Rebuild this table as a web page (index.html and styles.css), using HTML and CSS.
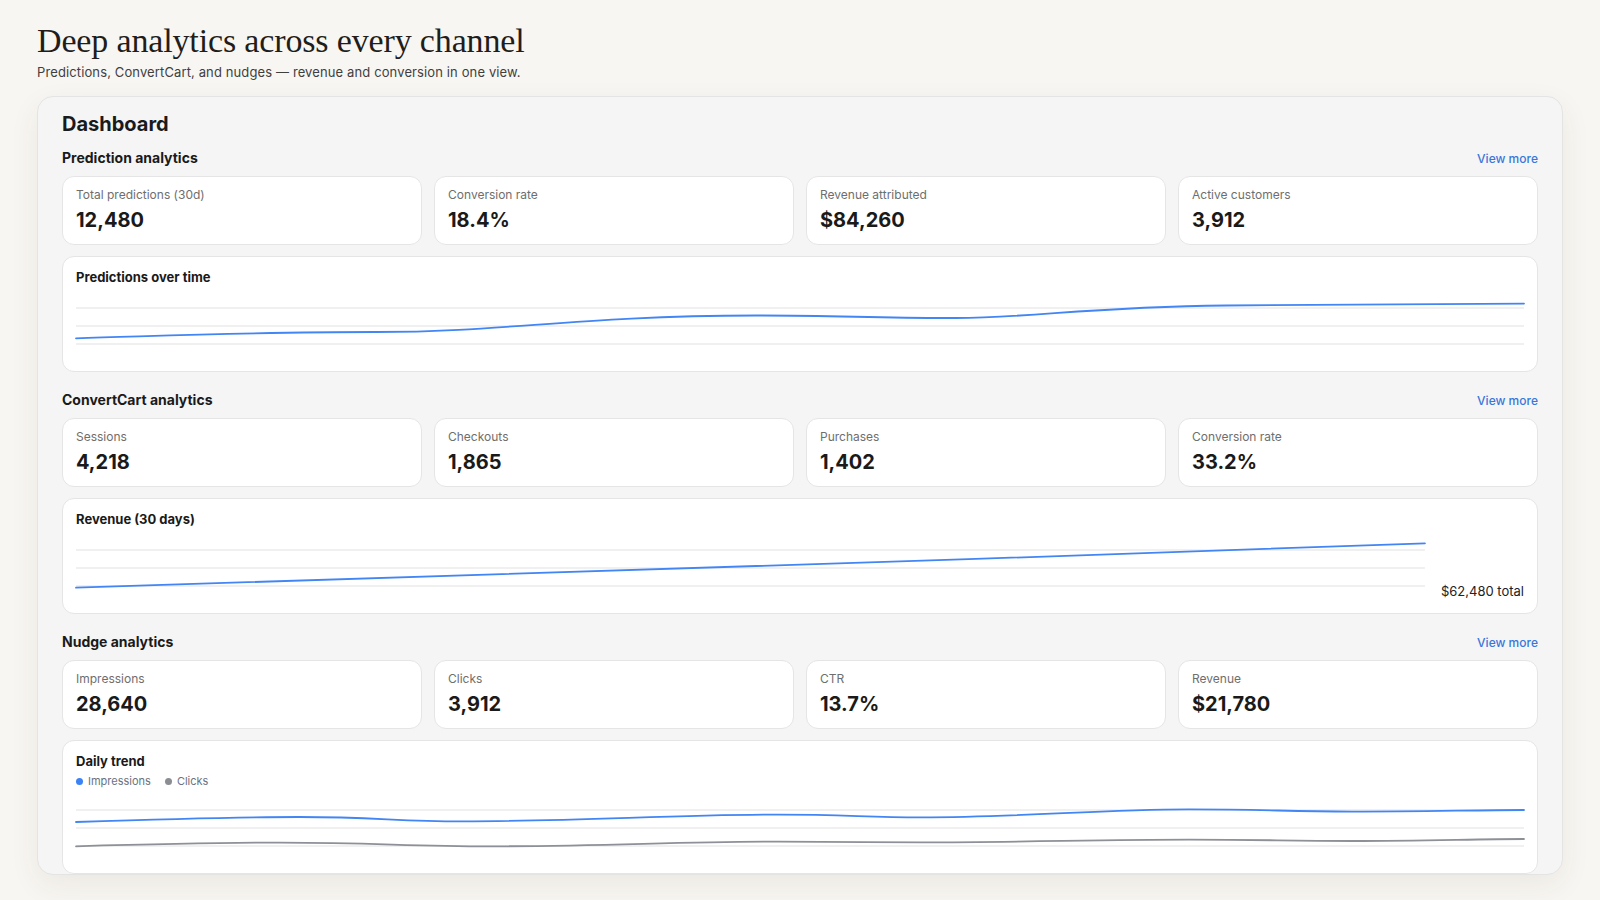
FILE: index.html
```html
<!DOCTYPE html>
<html lang="en">
<head>
<meta charset="utf-8">
<title>Deep analytics across every channel</title>
<link rel="stylesheet" href="styles.css">
</head>
<body>
<div class="page">
  <header class="hero">
    <h1 class="hero-title">Deep analytics across every channel</h1>
    <p class="hero-sub">Predictions, ConvertCart, and nudges — revenue and conversion in one view.</p>
  </header>

  <main class="panel">
    <h2 class="panel-title">Dashboard</h2>

    <section class="section">
      <div class="section-head">
        <h3 class="section-title">Prediction analytics</h3>
        <a class="view-more" href="#">View more</a>
      </div>
      <div class="stats">
        <div class="stat"><div class="stat-label">Total predictions (30d)</div><div class="stat-value">12,480</div></div>
        <div class="stat"><div class="stat-label">Conversion rate</div><div class="stat-value">18.4%</div></div>
        <div class="stat"><div class="stat-label">Revenue attributed</div><div class="stat-value">$84,260</div></div>
        <div class="stat"><div class="stat-label">Active customers</div><div class="stat-value">3,912</div></div>
      </div>
      <div class="chart-card">
        <div class="chart-title">Predictions over time</div>
        <svg class="chart" viewBox="0 0 1448 72" preserveAspectRatio="none">
          <line class="grid" x1="0" y1="18" x2="1448" y2="18"/>
          <line class="grid" x1="0" y1="36" x2="1448" y2="36"/>
          <line class="grid" x1="0" y1="54" x2="1448" y2="54"/>
          <path class="line-blue" d="M0,48.3 C100,45.5 180,42 300,42 C430,42 500,25.8 680,25.5 C760,25.3 800,28.3 880,28 C960,27.6 1010,17 1150,15.5 C1250,14.6 1350,14.6 1448,13.6"/>
        </svg>
      </div>
    </section>

    <section class="section">
      <div class="section-head">
        <h3 class="section-title">ConvertCart analytics</h3>
        <a class="view-more" href="#">View more</a>
      </div>
      <div class="stats">
        <div class="stat"><div class="stat-label">Sessions</div><div class="stat-value">4,218</div></div>
        <div class="stat"><div class="stat-label">Checkouts</div><div class="stat-value">1,865</div></div>
        <div class="stat"><div class="stat-label">Purchases</div><div class="stat-value">1,402</div></div>
        <div class="stat"><div class="stat-label">Conversion rate</div><div class="stat-value">33.2%</div></div>
      </div>
      <div class="chart-card">
        <div class="chart-title">Revenue (30 days)</div>
        <div class="chart-row">
          <svg class="chart" viewBox="0 0 1350 72" preserveAspectRatio="none">
            <line class="grid" x1="0" y1="18" x2="1350" y2="18"/>
            <line class="grid" x1="0" y1="36" x2="1350" y2="36"/>
            <line class="grid" x1="0" y1="54" x2="1350" y2="54"/>
            <path class="line-blue" d="M0,55.7 C420,46 900,26 1350,11.3"/>
          </svg>
          <div class="chart-total">$62,480 total</div>
        </div>
      </div>
    </section>

    <section class="section">
      <div class="section-head">
        <h3 class="section-title">Nudge analytics</h3>
        <a class="view-more" href="#">View more</a>
      </div>
      <div class="stats">
        <div class="stat"><div class="stat-label">Impressions</div><div class="stat-value">28,640</div></div>
        <div class="stat"><div class="stat-label">Clicks</div><div class="stat-value">3,912</div></div>
        <div class="stat"><div class="stat-label">CTR</div><div class="stat-value">13.7%</div></div>
        <div class="stat"><div class="stat-label">Revenue</div><div class="stat-value">$21,780</div></div>
      </div>
      <div class="chart-card">
        <div class="chart-title">Daily trend</div>
        <div class="legend">
          <span class="legend-item"><span class="dot dot-blue"></span>Impressions</span>
          <span class="legend-item"><span class="dot dot-gray"></span>Clicks</span>
        </div>
        <svg class="chart chart-trend" viewBox="0 0 1448 72" preserveAspectRatio="none">
          <line class="grid" x1="0" y1="18" x2="1448" y2="18"/>
          <line class="grid" x1="0" y1="36" x2="1448" y2="36"/>
          <line class="grid" x1="0" y1="54" x2="1448" y2="54"/>
          <path class="line-blue" d="M0,30 C90,27 150,25 223,25 C300,25 320,29.3 386,29.3 C500,29.3 600,22.6 702,22.6 C770,22.6 790,25.3 845,25.3 C950,25.3 1020,17.3 1113,17.3 C1190,17.3 1210,19.6 1276,19.6 C1350,19.6 1400,18 1448,18"/>
          <path class="line-gray" d="M0,54.3 C80,52 130,50.6 204,50.6 C300,50.6 330,54.3 415,54.3 C530,54.3 600,49.6 702,49.6 C770,49.6 790,50.3 845,50.3 C950,50.3 1020,47.6 1113,47.6 C1190,47.6 1210,49 1276,49 C1350,49 1400,47 1448,47"/>
        </svg>
      </div>
    </section>
  </main>
</div>
</body>
</html>
```

FILE: styles.css
```css
* { box-sizing: border-box; }

html, body {
  margin: 0;
  padding: 0;
  background: #f8f6f2;
}

body {
  font-family: Inter, "Noto Sans", "Liberation Sans", sans-serif;
  color: #1c1c1c;
  height: 900px;
  overflow: hidden;
}

.page {
  padding: 20px 37px 0;
}

.hero-title {
  margin: 0;
  font-family: "Liberation Serif", "DejaVu Serif", serif;
  font-weight: 400;
  font-size: 34px;
  line-height: 41px;
  letter-spacing: -0.15px;
  color: #221d1a;
}

.hero-sub {
  margin: 2px 0 0;
  font-size: 13px;
  line-height: 18px;
  letter-spacing: 0.12px;
  color: #3f3f3f;
}

.panel {
  margin-top: 15px;
  height: 779px;
  overflow: hidden;
  background: #f5f5f5;
  border: 1px solid #e4e4e4;
  border-radius: 16px;
  padding: 15px 24px 24px;
  box-shadow: 0 10px 30px rgba(70, 50, 30, 0.07);
}

.panel-title {
  margin: 0;
  font-size: 20px;
  line-height: 24px;
  font-weight: 700;
  color: #1a1a1a;
}

.section {
  margin-top: 12px;
}

.section + .section {
  margin-top: 18px;
}

.section-head {
  display: flex;
  justify-content: space-between;
  align-items: baseline;
  margin-bottom: 8px;
}

.section-title {
  margin: 0;
  font-size: 14px;
  line-height: 20px;
  font-weight: 700;
  color: #1a1a1a;
}

.view-more {
  font-size: 12px;
  line-height: 16px;
  font-weight: 500;
  color: #3b76d9;
  text-decoration: none;
}

.stats {
  display: grid;
  grid-template-columns: repeat(4, 1fr);
  gap: 12px;
}

.stat {
  background: #fff;
  border: 1px solid #e5e5e5;
  border-radius: 12px;
  padding: 10px 13px 11px;
}

.stat-label {
  font-size: 12px;
  line-height: 16px;
  color: #6e6e6e;
}

.stat-value {
  margin-top: 4px;
  font-size: 20px;
  line-height: 26px;
  font-weight: 700;
  color: #1a1a1a;
}

.chart-card {
  margin-top: 11px;
  background: #fff;
  border: 1px solid #e5e5e5;
  border-radius: 12px;
  padding: 12px 13px 9px;
}

.chart-title {
  font-size: 13px;
  line-height: 16px;
  font-weight: 700;
  color: #1a1a1a;
}

.chart {
  display: block;
  width: 100%;
  height: 72px;
  margin-top: 5px;
  overflow: visible;
}

.chart-trend {
  margin-top: 3px;
}

.chart-row {
  display: flex;
}

.chart-row .chart {
  flex: 1;
  width: auto;
  min-width: 0;
}

.chart-total {
  align-self: flex-end;
  margin: 0 0 5px 16px;
  font-size: 13px;
  line-height: 16px;
  color: #222;
  white-space: nowrap;
}

.grid {
  stroke: #f0f0f0;
  stroke-width: 2;
  vector-effect: non-scaling-stroke;
}

.line-blue,
.line-gray {
  fill: none;
  stroke-width: 1.8;
  vector-effect: non-scaling-stroke;
  stroke-linecap: round;
}

.line-blue { stroke: #4285f4; }
.line-gray { stroke: #8d9096; }

.legend {
  display: flex;
  gap: 14px;
  margin-top: 4px;
  font-size: 11px;
  line-height: 16px;
  color: #6b7280;
}

.legend-item {
  display: flex;
  align-items: center;
  gap: 5px;
}

.dot {
  width: 7px;
  height: 7px;
  border-radius: 50%;
}

.dot-blue { background: #3b82f6; }
.dot-gray { background: #8a8d91; }
```
